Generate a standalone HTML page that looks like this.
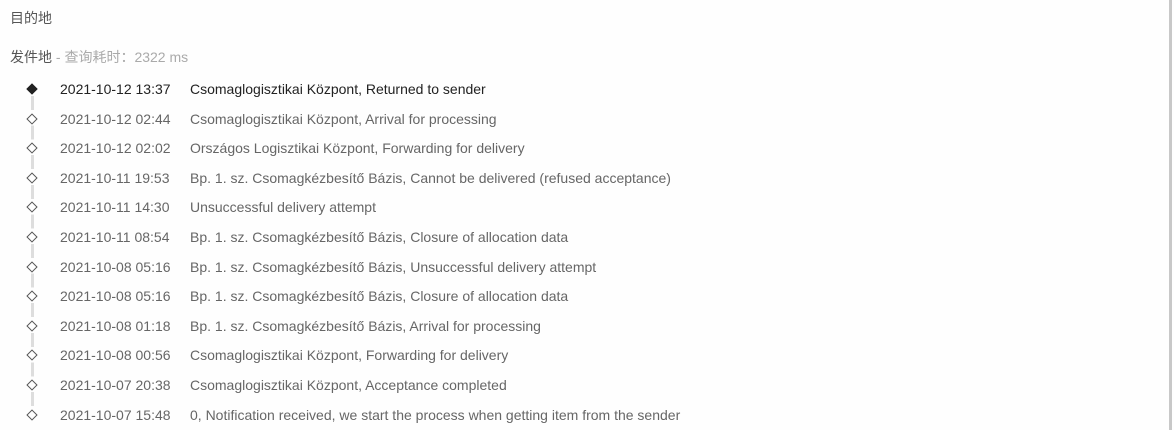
<!DOCTYPE html>
<html><head><style>
body{margin:0;width:1174px;height:430px;background:#fefefe;font-family:"Liberation Sans","Noto Sans CJK SC",sans-serif;font-size:14px;color:#666;position:relative;overflow:hidden}
.bar{position:absolute;left:1169px;top:0;width:3px;height:430px;background:#c8c8c8}
.t1{position:absolute;left:10px;top:8px;color:#555}
.t2{position:absolute;left:10px;top:47px;color:#555}
.t2 span{color:#aaa}
.line{position:absolute;left:31px;top:96px;width:3px;height:318px;background:repeating-linear-gradient(#ddd 0 14px,transparent 14px 29.6px);background-position:0 0}
.row{position:absolute;left:0;height:20px;line-height:20px;white-space:nowrap}
.d{position:absolute;left:28px;top:6px;width:6px;height:6px;border:1.3px solid #555;transform:rotate(45deg);background:#fefefe}
.row .dt{position:absolute;left:60px}
.row .tx{position:absolute;left:190px}
.first{color:#222}
.first .d{background:#222;border-color:#222}
</style></head><body>
<div class="bar"></div>
<div class="t1">目的地</div>
<div class="t2">发件地 <span>- 查询耗时：2322 ms</span></div>
<div class="line"></div>
<div class="row first" style="top:79px"><div class="d"></div><span class="dt">2021-10-12 13:37</span><span class="tx">Csomaglogisztikai Központ, Returned to sender</span></div>
<div class="row" style="top:108.6px"><div class="d"></div><span class="dt">2021-10-12 02:44</span><span class="tx">Csomaglogisztikai Központ, Arrival for processing</span></div>
<div class="row" style="top:138.2px"><div class="d"></div><span class="dt">2021-10-12 02:02</span><span class="tx">Országos Logisztikai Központ, Forwarding for delivery</span></div>
<div class="row" style="top:167.8px"><div class="d"></div><span class="dt">2021-10-11 19:53</span><span class="tx">Bp. 1. sz. Csomagkézbesítő Bázis, Cannot be delivered (refused acceptance)</span></div>
<div class="row" style="top:197.4px"><div class="d"></div><span class="dt">2021-10-11 14:30</span><span class="tx">Unsuccessful delivery attempt</span></div>
<div class="row" style="top:227px"><div class="d"></div><span class="dt">2021-10-11 08:54</span><span class="tx">Bp. 1. sz. Csomagkézbesítő Bázis, Closure of allocation data</span></div>
<div class="row" style="top:256.6px"><div class="d"></div><span class="dt">2021-10-08 05:16</span><span class="tx">Bp. 1. sz. Csomagkézbesítő Bázis, Unsuccessful delivery attempt</span></div>
<div class="row" style="top:286.2px"><div class="d"></div><span class="dt">2021-10-08 05:16</span><span class="tx">Bp. 1. sz. Csomagkézbesítő Bázis, Closure of allocation data</span></div>
<div class="row" style="top:315.8px"><div class="d"></div><span class="dt">2021-10-08 01:18</span><span class="tx">Bp. 1. sz. Csomagkézbesítő Bázis, Arrival for processing</span></div>
<div class="row" style="top:345.4px"><div class="d"></div><span class="dt">2021-10-08 00:56</span><span class="tx">Csomaglogisztikai Központ, Forwarding for delivery</span></div>
<div class="row" style="top:375px"><div class="d"></div><span class="dt">2021-10-07 20:38</span><span class="tx">Csomaglogisztikai Központ, Acceptance completed</span></div>
<div class="row" style="top:404.6px"><div class="d"></div><span class="dt">2021-10-07 15:48</span><span class="tx">0, Notification received, we start the process when getting item from the sender</span></div>
</body></html>
